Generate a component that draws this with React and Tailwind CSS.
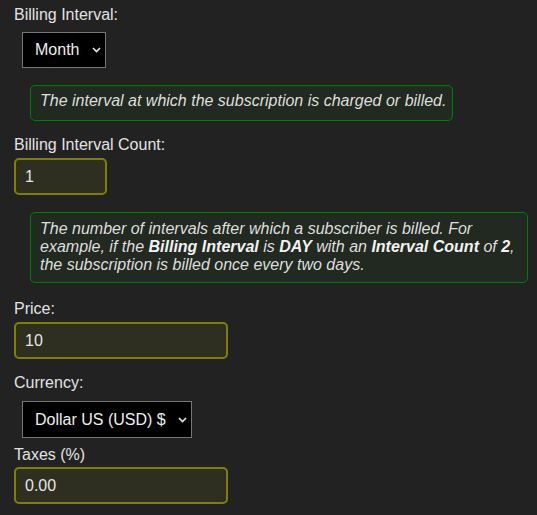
import React, { useState } from "react";

function Chevron() {
  return (
    <svg
      className="pointer-events-none absolute right-[5px] top-1/2 -translate-y-1/2"
      width="9"
      height="6"
      viewBox="0 0 9 6"
      fill="none"
      stroke="#e8e8e8"
      strokeWidth="1.6"
    >
      <path d="M1 1l3.5 3.5L8 1" />
    </svg>
  );
}

function Select({ value, options, onChange, width }) {
  return (
    <div className={`relative ml-[8px] ${width}`}>
      <select
        value={value}
        onChange={(e) => onChange(e.target.value)}
        className="block h-full w-full appearance-none border border-[#767676] bg-black pl-[12px] pr-[16px] text-[16px] text-[#eeeeee] outline-none"
      >
        {options.map((o) => (
          <option key={o}>{o}</option>
        ))}
      </select>
      <Chevron />
    </div>
  );
}

function Field({ value, onChange, width }) {
  return (
    <input
      value={value}
      onChange={(e) => onChange(e.target.value)}
      className={`block h-[37px] rounded-[5px] border-2 border-[#808000] bg-[#2e2e21] pl-[9px] text-[16px] text-[#e6e6e6] outline-none ${width}`}
    />
  );
}

export default function App() {
  const [interval, setInterval] = useState("Month");
  const [count, setCount] = useState("1");
  const [price, setPrice] = useState("10");
  const [currency, setCurrency] = useState("Dollar US (USD) $");
  const [taxes, setTaxes] = useState("0.00");

  return (
    <div
      className="min-h-[515px] bg-[#222222] pl-[14px] text-[16px] leading-[18px] text-[#e2e2e2]"
      style={{ fontFamily: '"Liberation Sans", Arial, sans-serif' }}
    >
      <div className="pt-[6px]">Billing Interval:</div>
      <div className="mt-[8px] flex">
        <Select
          value={interval}
          onChange={setInterval}
          options={["Day", "Week", "Month", "Year"]}
          width="h-[36px] w-[84px]"
        />
      </div>

      <div className="mt-[17px] ml-[16px] inline-block h-[36px] rounded-[5px] border border-[#008000] bg-[#212920] pt-[6px] pl-[9px] pr-[6px] italic text-[#dedede]">
        The interval at which the subscription is charged or billed.
      </div>

      <div className="mt-[15px]">Billing Interval Count:</div>
      <div className="mt-[4px]">
        <Field value={count} onChange={setCount} width="w-[93px]" />
      </div>

      <div className="mt-[17px] ml-[16px] h-[71px] w-[498px] rounded-[5px] border border-[#008000] bg-[#212920] pt-[7px] pl-[9px] pr-[8px] italic text-[#dedede]">
        The number of intervals after which a subscriber is billed. For
        <br />
        example, if the <b className="text-[#f2f2f2]">Billing Interval</b> is{" "}
        <b className="text-[#f2f2f2]">DAY</b> with an{" "}
        <b className="text-[#f2f2f2]">Interval Count</b> of{" "}
        <b className="text-[#f2f2f2]">2</b>,
        <br />
        the subscription is billed once every two days.
      </div>

      <div className="mt-[17px]">Price:</div>
      <div className="mt-[4px]">
        <Field value={price} onChange={setPrice} width="w-[214px]" />
      </div>

      <div className="mt-[15px]">Currency:</div>
      <div className="mt-[9px] flex">
        <Select
          value={currency}
          onChange={setCurrency}
          options={["Dollar US (USD) $", "Euro (EUR) €", "Pound (GBP) £"]}
          width="h-[37px] w-[170px]"
        />
      </div>

      <div className="mt-[8px]">Taxes (%)</div>
      <div className="mt-[3px]">
        <Field value={taxes} onChange={setTaxes} width="w-[214px]" />
      </div>
    </div>
  );
}
